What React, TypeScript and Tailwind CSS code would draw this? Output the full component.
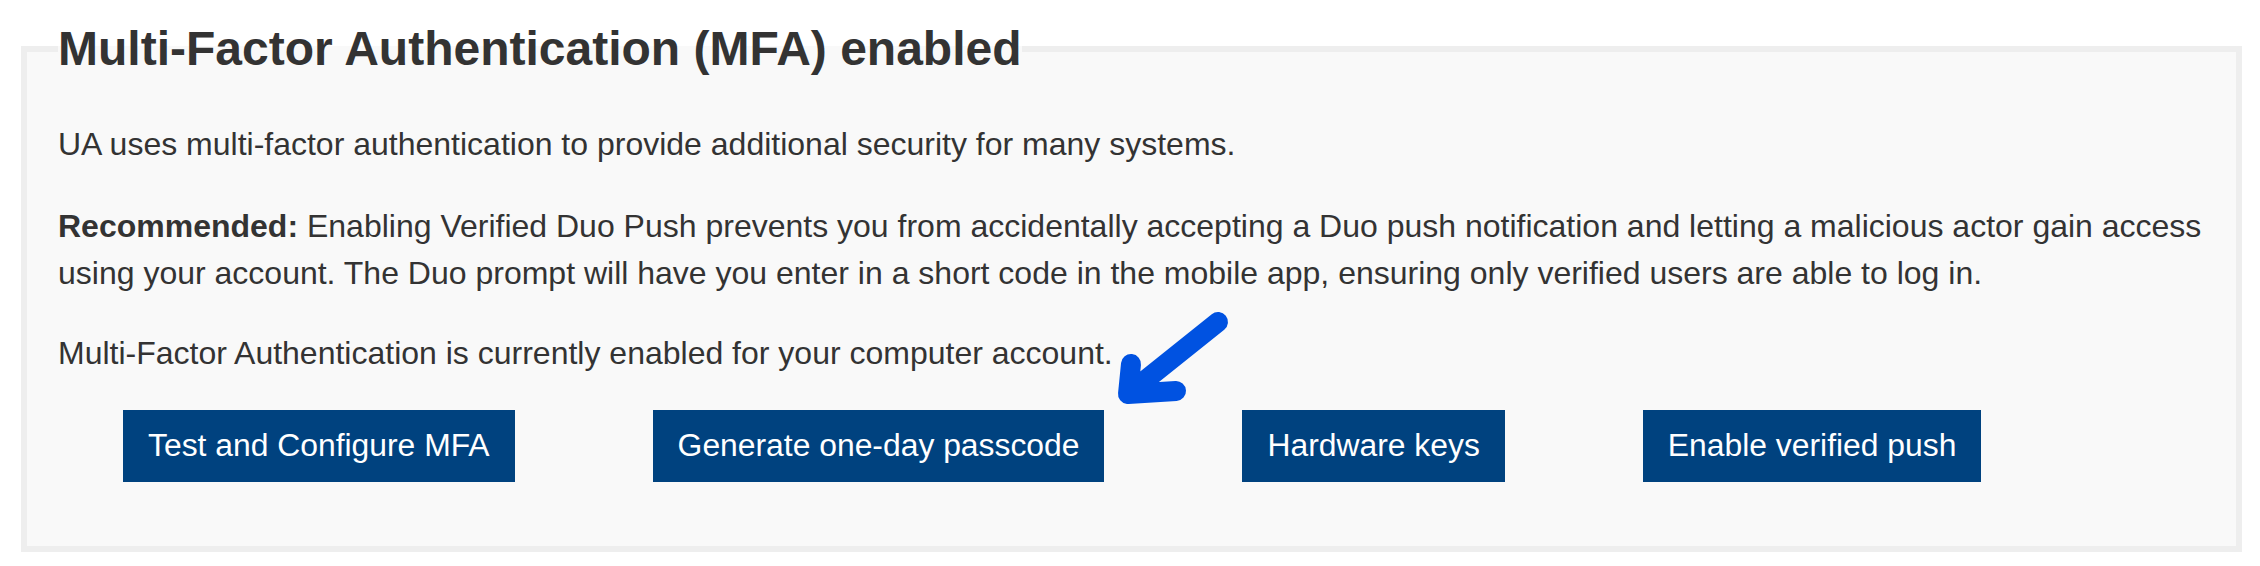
import React from 'react'

const BUTTONS = [
  'Test and Configure MFA',
  'Generate one-day passcode',
  'Hardware keys',
  'Enable verified push',
]

function Arrow() {
  return (
    <svg
      className="pointer-events-none absolute left-[1100px] top-[300px]"
      width="140"
      height="120"
      viewBox="0 0 140 120"
      fill="none"
    >
      <path
        d="M118 22 L28 94 M31 64 L28 94 L76 91"
        stroke="#0052e1"
        strokeWidth="20"
        strokeLinecap="round"
        strokeLinejoin="round"
      />
    </svg>
  )
}

export default function App() {
  return (
    <div
      className="relative h-[566px] w-[2260px] bg-white pt-[21px] text-[#333333]"
      style={{ fontFamily: '"Liberation Sans", Arial, sans-serif' }}
    >
      <fieldset className="ml-[21px] w-[2221px] border-[6px] border-[#eeeeee] bg-[#f9f9f9] px-[31px] pb-[64px]">
        <legend className="text-[48px] font-bold leading-[55px]">
          Multi-Factor Authentication (MFA) enabled
        </legend>

        <p className="mt-[45px] text-[32px] leading-[47px]">
          UA uses multi-factor authentication to provide additional security for many systems.
        </p>
        <p className="mt-[35px] text-[32px] leading-[47px]">
          <strong className="font-bold">Recommended:</strong> Enabling Verified Duo Push prevents
          you from accidentally accepting a Duo push notification and letting a malicious actor
          gain access using your account. The Duo prompt will have you enter in a short code in the
          mobile app, ensuring only verified users are able to log in.
        </p>
        <p className="mt-[33px] text-[32px] leading-[47px]">
          Multi-Factor Authentication is currently enabled for your computer account.
        </p>

        <div className="ml-[65px] mt-[33px] flex gap-[138px]">
          {BUTTONS.map((b) => (
            <button
              key={b}
              type="button"
              className="h-[72px] bg-[#00427f] px-[25px] text-[31.85px] text-white"
            >
              {b}
            </button>
          ))}
        </div>
      </fieldset>
      <Arrow />
    </div>
  )
}
